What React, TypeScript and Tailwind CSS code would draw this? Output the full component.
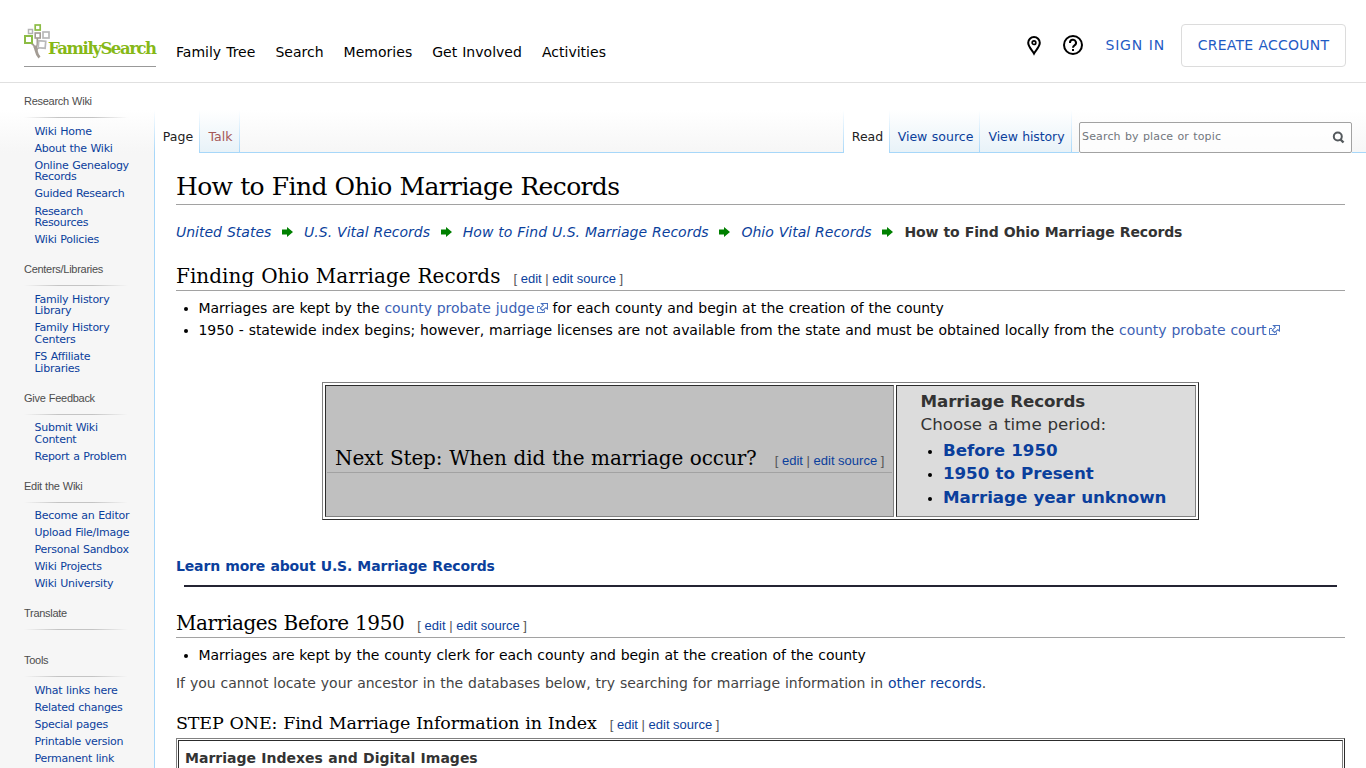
import type { ReactNode } from "react";

const navLinks = ["Family Tree", "Search", "Memories", "Get Involved", "Activities"];

const sidebar = [
    { title: "Research Wiki", links: ["Wiki Home", "About the Wiki", "Online Genealogy Records", "Guided Research", "Research Resources", "Wiki Policies"] },
    { title: "Centers/Libraries", links: ["Family History Library", "Family History Centers", "FS Affiliate Libraries"] },
    { title: "Give Feedback", links: ["Submit Wiki Content", "Report a Problem"] },
    { title: "Edit the Wiki", links: ["Become an Editor", "Upload File/Image", "Personal Sandbox", "Wiki Projects", "Wiki University"] },
    { title: "Translate", links: [] },
    { title: "Tools", links: ["What links here", "Related changes", "Special pages", "Printable version", "Permanent link"] },
];

const crumbs = ["United States", "U.S. Vital Records", "How to Find U.S. Marriage Records", "Ohio Vital Records"];

const Logo = () => (
    <a href="#" className="flex w-[132px] h-[43px] mt-6 border-b border-[#999] shrink-0">
        <svg className="w-[26px] h-[35px] shrink-0" viewBox="0 0 26 35" fill="none">
            <path d="M7 19C9.500 20.500 11 22 11.500 25M13.300 14V20C13.300 22 12 23 12 25M12.500 27.500C12.500 25 14 23.500 17 23" stroke="#a39c94" strokeWidth="1.600" />
            <path d="M10.500 22C12.500 25 11.500 29.500 15.500 33.500" stroke="#a39c94" strokeWidth="2.800" />
            <rect x="11.200" y="1" width="5" height="5" stroke="#8cbc45" strokeWidth="1.700" />
            <rect x="4.500" y="5.500" width="4" height="4" stroke="#b3b3b3" strokeWidth="1.500" />
            <rect x="11.200" y="9" width="5" height="5" stroke="#a39c94" strokeWidth="1.600" />
            <rect x="19" y="8" width="6" height="6" stroke="#b9b9b9" strokeWidth="1.700" />
            <rect x="1" y="12" width="7" height="7" stroke="#8cbc45" strokeWidth="2" />
            <rect x="14.500" y="17" width="7" height="7" fill="#fff" stroke="#b9b9b9" strokeWidth="1.700" transform="rotate(5 18 20)" />
        </svg>
        <span className="font-['DejaVu_Serif',serif] font-bold text-[16.5px] leading-[20px] tracking-[-1.45px] text-[#86b817] mt-[15px] -ml-[2px] whitespace-nowrap">FamilySearch</span>
    </a>
);

const Arrow = () => (
    <svg className="inline-block w-[11px] h-[10px] ml-[10.500px] mr-[11.300px] shrink-0" viewBox="0 0 11 10" fill="#008000">
        <path d="M0 2.500H5V0L11 5L5 10V7.500H0Z" />
    </svg>
);

const External = ({ children }: { children: ReactNode }) => (
    <a href="#" className="text-[#3d62b5]">
        {children}
        <svg className="inline-block w-[11px] h-[10px] ml-[2px] mb-[3px]" viewBox="0 0 11 10" fill="none" stroke="#4a72c0">
            <path d="M3 3.500H.5V9.500H7.500V7.500" />
            <path d="M4.500.5H10.500V6L8.800 4.700L5.700 7.500L3.200 5.200L6.300 2.300Z" strokeWidth="1.100" />
        </svg>
    </a>
);

const EditLinks = ({ className }: { className: string }) => (
    <span className={`font-['Liberation_Sans',sans-serif] text-[13px] tracking-normal [word-spacing:0] text-[#555] whitespace-nowrap ${className}`}>
        [ <a href="#" className="text-[#0b3f9c]">edit</a> | <a href="#" className="text-[#0b3f9c]">edit source</a> ]
    </span>
);

const Tab = ({ children, className }: { children: string; className: string }) => (
    <a href="#" className={`h-[43px] pt-[17px] pl-[2px] text-center text-[12.5px] leading-[20px] whitespace-nowrap ${className}`}>{children}</a>
);

const App = () => {
    return (
        <div className="h-screen overflow-hidden bg-white font-['DejaVu_Sans',sans-serif] text-[14px] leading-[22px] [word-spacing:0.5px] text-black">
            <header className="flex h-[83px] pl-6 pr-5 border-b border-[#e0e0e0]">
                <Logo />
                <nav className="flex gap-[20px] pl-5 pt-[41px] tracking-[0.02px]">
                    {navLinks.map((link) => <a key={link} href="#" className="whitespace-nowrap">{link}</a>)}
                </nav>
                <div className="ml-auto flex items-start pt-6">
                    <svg className="w-[14px] h-[20px] mt-[12px]" viewBox="0 0 14 20" fill="none" stroke="#000" strokeWidth="2">
                        <path d="M7 17.500C5.500 14.500 1.200 11 1.200 6.800A5.800 5.800 0 0 1 12.800 6.800C12.800 11 8.500 14.500 7 17.500Z" />
                        <circle cx="7" cy="6.700" r="1.800" strokeWidth="1.700" />
                    </svg>
                    <svg className="w-[20px] h-[20px] mt-[11px] ml-[22px]" viewBox="0 0 20 20" fill="none" stroke="#000" strokeWidth="2">
                        <circle cx="10" cy="10" r="9" />
                        <path d="M7 8A3 3 0 1 1 11.500 10.300C10.400 11 10 11.500 10 12.700" />
                        <path d="M10 14V16" />
                    </svg>
                    <a href="#" className="text-[#1f5bc4] mt-[10px] ml-[22.600px] tracking-[0.8px] whitespace-nowrap">SIGN IN</a>
                    <a href="#" className="w-[165px] h-[43px] ml-4 border border-[#dcdcdc] rounded text-[#1f5bc4] leading-[41px] text-center tracking-[0.22px] whitespace-nowrap">CREATE ACCOUNT</a>
                </div>
            </header>

            <div className="flex h-[685px]">
                <aside className="w-[154px] shrink-0 pl-6 pt-[10px] overflow-hidden bg-[linear-gradient(#fff_27px,#f6f6f6_70px)]">
                    {sidebar.map((section) => (
                        <section key={section.title} className="mb-[14.8px]">
                            <h3 className="h-6 font-['Liberation_Sans',sans-serif] text-[11px] leading-[16px] tracking-[-0.28px] text-[#4d4d4d]">{section.title}</h3>
                            <div className="w-[104px] h-px mb-[7.600px] bg-[linear-gradient(to_right,transparent,#c4c4c4_33%,#c4c4c4_66%,transparent)]" />
                            <ul className="flex flex-col gap-[5.24px] pl-[10.500px] w-[112px]">
                                {section.links.map((link) => (
                                    <li key={link} className="text-[11px] leading-[11.8px] tracking-[-0.26px]"><a href="#" className="text-[#0b3f9c]">{link}</a></li>
                                ))}
                            </ul>
                        </section>
                    ))}
                </aside>

                <main className="flex-1 min-w-0">
                    <div className="flex items-end h-[70px] bg-[linear-gradient(#fff_27px,#f6f6f6_70px)]">
                        <div className="w-px h-[43px] bg-[linear-gradient(#fff,#a7d7f9)]" />
                        <Tab className="w-[44px] bg-white text-[#222]">Page</Tab>
                        <div className="w-px h-[43px] bg-[linear-gradient(#fff,#a7d7f9)]" />
                        <Tab className="w-[39px] border-b border-[#a7d7f9] bg-[linear-gradient(#fff,#e8f2f8)] text-[#a55858]">Talk</Tab>
                        <div className="w-px h-[43px] bg-[linear-gradient(#fff,#a7d7f9)]" />
                        <div className="flex-1 h-px bg-[#a7d7f9]" />
                        <div className="w-px h-[43px] bg-[linear-gradient(#fff,#a7d7f9)]" />
                        <Tab className="w-[45px] bg-white text-[#222]">Read</Tab>
                        <div className="w-px h-[43px] bg-[linear-gradient(#fff,#a7d7f9)]" />
                        <Tab className="w-[89px] border-b border-[#a7d7f9] bg-[linear-gradient(#fff,#e8f2f8)] text-[#0b3f9c]">View source</Tab>
                        <div className="w-px h-[43px] bg-[linear-gradient(#fff,#a7d7f9)]" />
                        <Tab className="w-[91px] border-b border-[#a7d7f9] bg-[linear-gradient(#fff,#e8f2f8)] tracking-[-0.1px] text-[#0b3f9c]">View history</Tab>
                        <div className="w-px h-[43px] bg-[linear-gradient(#fff,#a7d7f9)]" />
                        <div className="w-[7px] h-px bg-[#a7d7f9]" />
                        <div className="flex items-center justify-between w-[273px] h-[31px] pl-[2px] pr-[6px] border border-[#a2a2a2] rounded-[2px] bg-white/70">
                            <span className="text-[11px] leading-[20px] tracking-[0.16px] text-[#72777d] -mt-px">Search by place or topic</span>
                            <svg className="w-[13px] h-[13px]" viewBox="0 0 13 13" fill="none" stroke="#54595d" strokeWidth="2">
                                <circle cx="5.800" cy="5.500" r="4" />
                                <path d="M8.500 8.500L11.500 11.500" strokeWidth="2.400" />
                            </svg>
                        </div>
                        <div className="w-[14px] h-px bg-[#a7d7f9]" />
                    </div>

                    <div className="h-[615px] pl-[21px] pr-[21px] pt-[18px] border-l border-[#a7d7f9] overflow-hidden">
                        <h1 className="h-[34px] border-b border-[#a2a2a2] font-['DejaVu_Serif',serif] text-[25px] leading-[32px] tracking-[-0.63px] whitespace-nowrap">How to Find Ohio Marriage Records</h1>

                        <div className="flex items-center mt-4 h-[22px] whitespace-nowrap">
                            {crumbs.map((crumb) => (
                                <span key={crumb} className="flex items-center">
                                    <a href="#" className="italic text-[#0b3f9c]">{crumb}</a>
                                    <Arrow />
                                </span>
                            ))}
                            <b className="text-[#333] tracking-[-0.14px]">How to Find Ohio Marriage Records</b>
                        </div>

                        <h2 className="h-[28px] mt-[20px] border-b border-[#a2a2a2] font-['DejaVu_Serif',serif] text-[20px] leading-[26px] tracking-[0.03px] whitespace-nowrap">
                            Finding Ohio Marriage Records<EditLinks className="ml-[13px]" />
                        </h2>
                        <ul className="mt-[6px] pl-[22.500px] list-disc tracking-[-0.055px] whitespace-nowrap">
                            <li>Marriages are kept by the <External>county probate judge</External> for each county and begin at the creation of the county</li>
                            <li>1950 - statewide index begins; however, marriage licenses are not available from the state and must be obtained locally from the <External>county probate court</External></li>
                        </ul>

                        <div className="flex gap-[2px] w-[877px] h-[138px] mt-[41px] ml-[146px] p-[2px] border border-t-[#808080] border-l-[#808080] border-r-[#2c2c2c] border-b-[#2c2c2c]">
                            <div className="w-[569px] pt-[59px] px-px border border-t-[#2c2c2c] border-l-[#2c2c2c] border-r-[#808080] border-b-[#808080] bg-[#c0c0c0]">
                                <h2 className="h-[28px] pl-[8px] border-b border-[#a2a2a2] font-['DejaVu_Serif',serif] text-[20px] leading-[26px] tracking-[-0.12px] whitespace-nowrap">
                                    Next Step: When did the marriage occur?<EditLinks className="ml-[18px]" />
                                </h2>
                            </div>
                            <div className="flex-1 pl-[23.500px] pt-[3.500px] border border-t-[#2c2c2c] border-l-[#2c2c2c] border-r-[#808080] border-b-[#808080] bg-[#dcdcdc] text-[16.7px] leading-[23.500px] text-[#333] whitespace-nowrap">
                                <b className="tracking-[-0.12px]">Marriage Records</b>
                                <div>Choose a time period:</div>
                                <ul className="pl-[22.500px] mt-[2.400px] list-disc font-bold tracking-[-0.05px] text-[#0b3f9c] marker:text-black marker:text-[14px]">
                                    <li><a href="#">Before 1950</a></li>
                                    <li><a href="#">1950 to Present</a></li>
                                    <li><a href="#">Marriage year unknown</a></li>
                                </ul>
                            </div>
                        </div>

                        <a href="#" className="block mt-[35px] font-bold tracking-[-0.15px] text-[#0b3f9c]">Learn more about U.S. Marriage Records</a>
                        <div className="mt-[8px] mx-[8px] h-[2px] bg-[#242433]" />

                        <h2 className="h-[28px] mt-[23px] border-b border-[#a2a2a2] font-['DejaVu_Serif',serif] text-[20px] leading-[26px] tracking-[-0.4px] whitespace-nowrap">
                            Marriages Before 1950<EditLinks className="ml-[13px]" />
                        </h2>
                        <ul className="mt-[6px] pl-[22.500px] list-disc tracking-[-0.065px] whitespace-nowrap">
                            <li>Marriages are kept by the county clerk for each county and begin at the creation of the county</li>
                        </ul>
                        <p className="mt-[6px] tracking-[-0.03px] text-[#444] whitespace-nowrap">If you cannot locate your ancestor in the databases below, try searching for marriage information in <a href="#" className="text-[#0b3f9c]">other records</a>.</p>

                        <h3 className="mt-[17px] h-[24px] font-['DejaVu_Serif',serif] text-[17.5px] leading-[24px] tracking-[-0.15px] whitespace-nowrap">
                            STEP ONE: Find Marriage Information in Index<EditLinks className="ml-[13px]" />
                        </h3>
                        <div className="mt-[3px] h-[60px] p-px border border-t-[#808080] border-l-[#808080] border-r-[#2c2c2c]">
                            <div className="h-full pl-[6px] pt-[6px] border border-t-[#2c2c2c] border-l-[#2c2c2c] border-r-[#808080] font-bold text-[#333]">Marriage Indexes and Digital Images</div>
                        </div>
                    </div>
                </main>
            </div>
        </div>
    );
};

export default App;
